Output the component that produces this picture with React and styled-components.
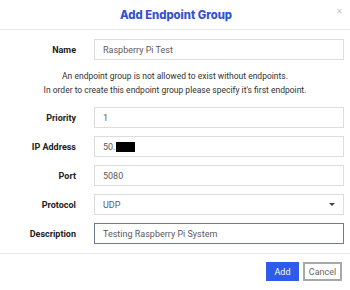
import React from "react";
import styled, { createGlobalStyle } from "styled-components";

const GlobalStyle = createGlobalStyle`
  html, body {
    margin: 0;
    padding: 0;
    background: #fff;
  }
  body {
    font-family: Roboto, "Liberation Sans", sans-serif;
  }
`;

const Modal = styled.div`
  width: 350px;
  height: 290px;
  display: flex;
  flex-direction: column;
  background: #fff;
  box-sizing: border-box;
`;

const Header = styled.div`
  height: 29px;
  position: relative;
  display: flex;
  align-items: center;
  justify-content: center;
  border-bottom: 1px solid #ececec;
`;

const Title = styled.h1`
  margin: 0 0 -1px 2px;
  font-family: Inter, "Noto Sans", sans-serif;
  font-weight: 800;
  font-size: 11.3px;
  color: #3452cf;
`;

const Close = styled.button`
  position: absolute;
  right: 6px;
  top: 7px;
  border: none;
  background: none;
  padding: 0;
  width: 10px;
  height: 10px;
  color: #c4c4c4;
  font-size: 8px;
  line-height: 10px;
  cursor: pointer;
`;

const Body = styled.div`
  padding: 9px 6px 9px 0;
  display: flex;
  flex-direction: column;
`;

const Grid = styled.div`
  display: grid;
  grid-template-columns: 76px 1fr;
  column-gap: 18px;
  row-gap: 8px;
  align-items: center;
`;

const Label = styled.label`
  text-align: right;
  font-size: 9px;
  font-weight: 700;
  color: #222;
`;

const Field = styled.div`
  height: 21px;
  box-sizing: border-box;
  border: 1px solid ${(p) => (p.$focused ? "#6e7c99" : "#dcdcdc")};
  padding: 0 8px;
  display: flex;
  align-items: center;
  font-size: 9px;
  color: #5a5a5a;
  background: #fff;
`;

const Redacted = styled.span`
  display: inline-block;
  width: 19px;
  height: 10px;
  background: #000;
`;

const Caret = styled.span`
  margin-left: auto;
  width: 0;
  height: 0;
  border-left: 3px solid transparent;
  border-right: 3px solid transparent;
  border-top: 3px solid #444;
`;

const Info = styled.p`
  margin: 9px 0 10px 0;
  padding-left: 6px;
  text-align: center;
  font-size: 8.5px;
  line-height: 14px;
  color: #333;
`;

const Footer = styled.div`
  border-top: 1px solid #ececec;
  display: flex;
  justify-content: flex-end;
  gap: 4px;
  padding: 8px 8px 0 0;
`;

const Button = styled.button`
  height: 19px;
  box-sizing: border-box;
  min-width: ${(p) => (p.$primary ? "33px" : "39px")};
  padding: 0 3px;
  font-family: Roboto, "Liberation Sans", sans-serif;
  font-size: 9px;
  border: ${(p) => (p.$primary ? "1px solid #2f5bea" : "2px solid #a8a8a8")};
  background: ${(p) => (p.$primary ? "#2f5bea" : "#fff")};
  color: ${(p) => (p.$primary ? "#fff" : "#666")};
  cursor: pointer;
`;

const rowsTop = [{ label: "Name", value: "Raspberry Pi Test" }];

const rowsBottom = [
  { label: "Priority", value: "1" },
  { label: "IP Address", value: "50.", redacted: true },
  { label: "Port", value: "5080" },
  { label: "Protocol", value: "UDP", select: true },
  { label: "Description", value: "Testing Raspberry Pi System", focused: true },
];

const Rows = ({ rows }) => (
  <Grid>
    {rows.map((r) => (
      <React.Fragment key={r.label}>
        <Label>{r.label}</Label>
        <Field $focused={r.focused}>
          {r.value}
          {r.redacted && <Redacted />}
          {r.select && <Caret />}
        </Field>
      </React.Fragment>
    ))}
  </Grid>
);

const App = () => (
  <>
    <GlobalStyle />
    <Modal>
      <Header>
        <Title>Add Endpoint Group</Title>
        <Close aria-label="Close">✕</Close>
      </Header>
      <Body>
        <Rows rows={rowsTop} />
        <Info>
          An endpoint group is not allowed to exist without endpoints.
          <br />
          In order to create this endpoint group please specify it's first endpoint.
        </Info>
        <Rows rows={rowsBottom} />
      </Body>
      <Footer>
        <Button $primary>Add</Button>
        <Button>Cancel</Button>
      </Footer>
    </Modal>
  </>
);

export default App;
